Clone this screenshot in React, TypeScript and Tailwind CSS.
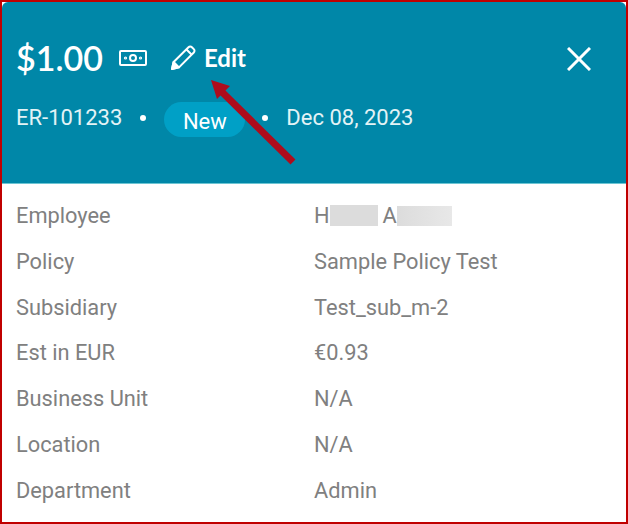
import React from "react";

const rows = [
  { label: "Employee", value: "masked" },
  { label: "Policy", value: "Sample Policy Test" },
  { label: "Subsidiary", value: "Test_sub_m-2" },
  { label: "Est in EUR", value: "€0.93" },
  { label: "Business Unit", value: "N/A" },
  { label: "Location", value: "N/A" },
  { label: "Department", value: "Admin" },
];

const MoneyIcon = () => (
  <svg width="28" height="18" viewBox="0 0 28 18" fill="none" stroke="#fff" strokeWidth="2">
    <rect x="1" y="2" width="26" height="14" rx="1" />
    <circle cx="14" cy="9" r="3" />
    <circle cx="6.5" cy="9" r="0.6" />
    <circle cx="21.5" cy="9" r="0.6" />
  </svg>
);

const PencilIcon = () => (
  <svg width="27" height="27" viewBox="0 0 27 27" fill="none" stroke="#fff" strokeWidth="2" strokeLinejoin="round">
    <path d="M2 25l1.6-7L18.5 3.2a2.4 2.4 0 0 1 3.4 0l1.9 1.9a2.4 2.4 0 0 1 0 3.4L9 23.4z" />
    <path d="M16.5 5.5l5 5" />
    <path d="M2 25l1.6-7 5.4 5.4z" fill="#fff" />
  </svg>
);

const App: React.FC = () => {
  return (
    <div className="relative h-[524px] w-[628px] overflow-hidden border-2 border-[#c00000] bg-white font-['Roboto',sans-serif]">
      <div className="h-[182px] rounded-t-[6px] border-b border-[#6cc5d3] bg-[#0087a8] px-[14px] text-white">
        <div className="flex h-[110px] items-center">
          <div className="flex items-center pt-[1px] font-['Lato',sans-serif] font-bold">
            <span className="text-[34px] font-semibold leading-none">$1.00</span>
            <span className="ml-[16px]">
              <MoneyIcon />
            </span>
            <span className="ml-[23px]">
              <PencilIcon />
            </span>
            <span className="ml-[7px] text-[24px] leading-none">Edit</span>
          </div>
          <svg className="ml-auto mr-[21px] mt-[4px]" width="24" height="24" viewBox="0 0 24 24" stroke="#fff" strokeWidth="3">
            <path d="M1 1l22 22M23 1L1 23" />
          </svg>
        </div>
        <div className="-mt-[13px] flex items-center text-[22px] leading-none text-[#e3f3f6]">
          <span>ER-101233</span>
          <span className="ml-[18px] h-[6px] w-[6px] rounded-full bg-white" />
          <span className="ml-[18px] mt-[3px] flex h-[35px] w-[81px] items-center justify-center rounded-full bg-[#00a0c6] pt-[4px] text-white">
            New
          </span>
          <span className="ml-[17px] h-[6px] w-[6px] rounded-full bg-white" />
          <span className="ml-[18px]">Dec 08, 2023</span>
        </div>
      </div>
      <div className="flex flex-col pt-[9px] text-[21.8px] leading-[45.8px] text-[#808080]">
        {rows.map((row) => (
          <div key={row.label} className="flex px-[14px]">
            <span className="w-[298px]">{row.label}</span>
            {row.value === "masked" ? (
              <span className="flex items-center">
                H
                <span className="h-[21px] w-[48px] bg-[#dcdcdc]" />
                <span className="ml-[5px]">A</span>
                <span className="h-[20px] w-[55px] bg-gradient-to-r from-[#dcdcdc] to-[#e8e8e8]" />
              </span>
            ) : (
              <span>{row.value}</span>
            )}
          </div>
        ))}
      </div>
      {/* callout arrow on top of the screenshot */}
      <svg className="absolute left-[-2px] top-[-2px]" width="628" height="524" viewBox="0 0 628 524">
        <path d="M293 162L222 92" stroke="#ad0c1c" strokeWidth="7" />
        <path d="M211 80L230 86L217 99z" fill="#ad0c1c" />
      </svg>
    </div>
  );
};

export default App;
